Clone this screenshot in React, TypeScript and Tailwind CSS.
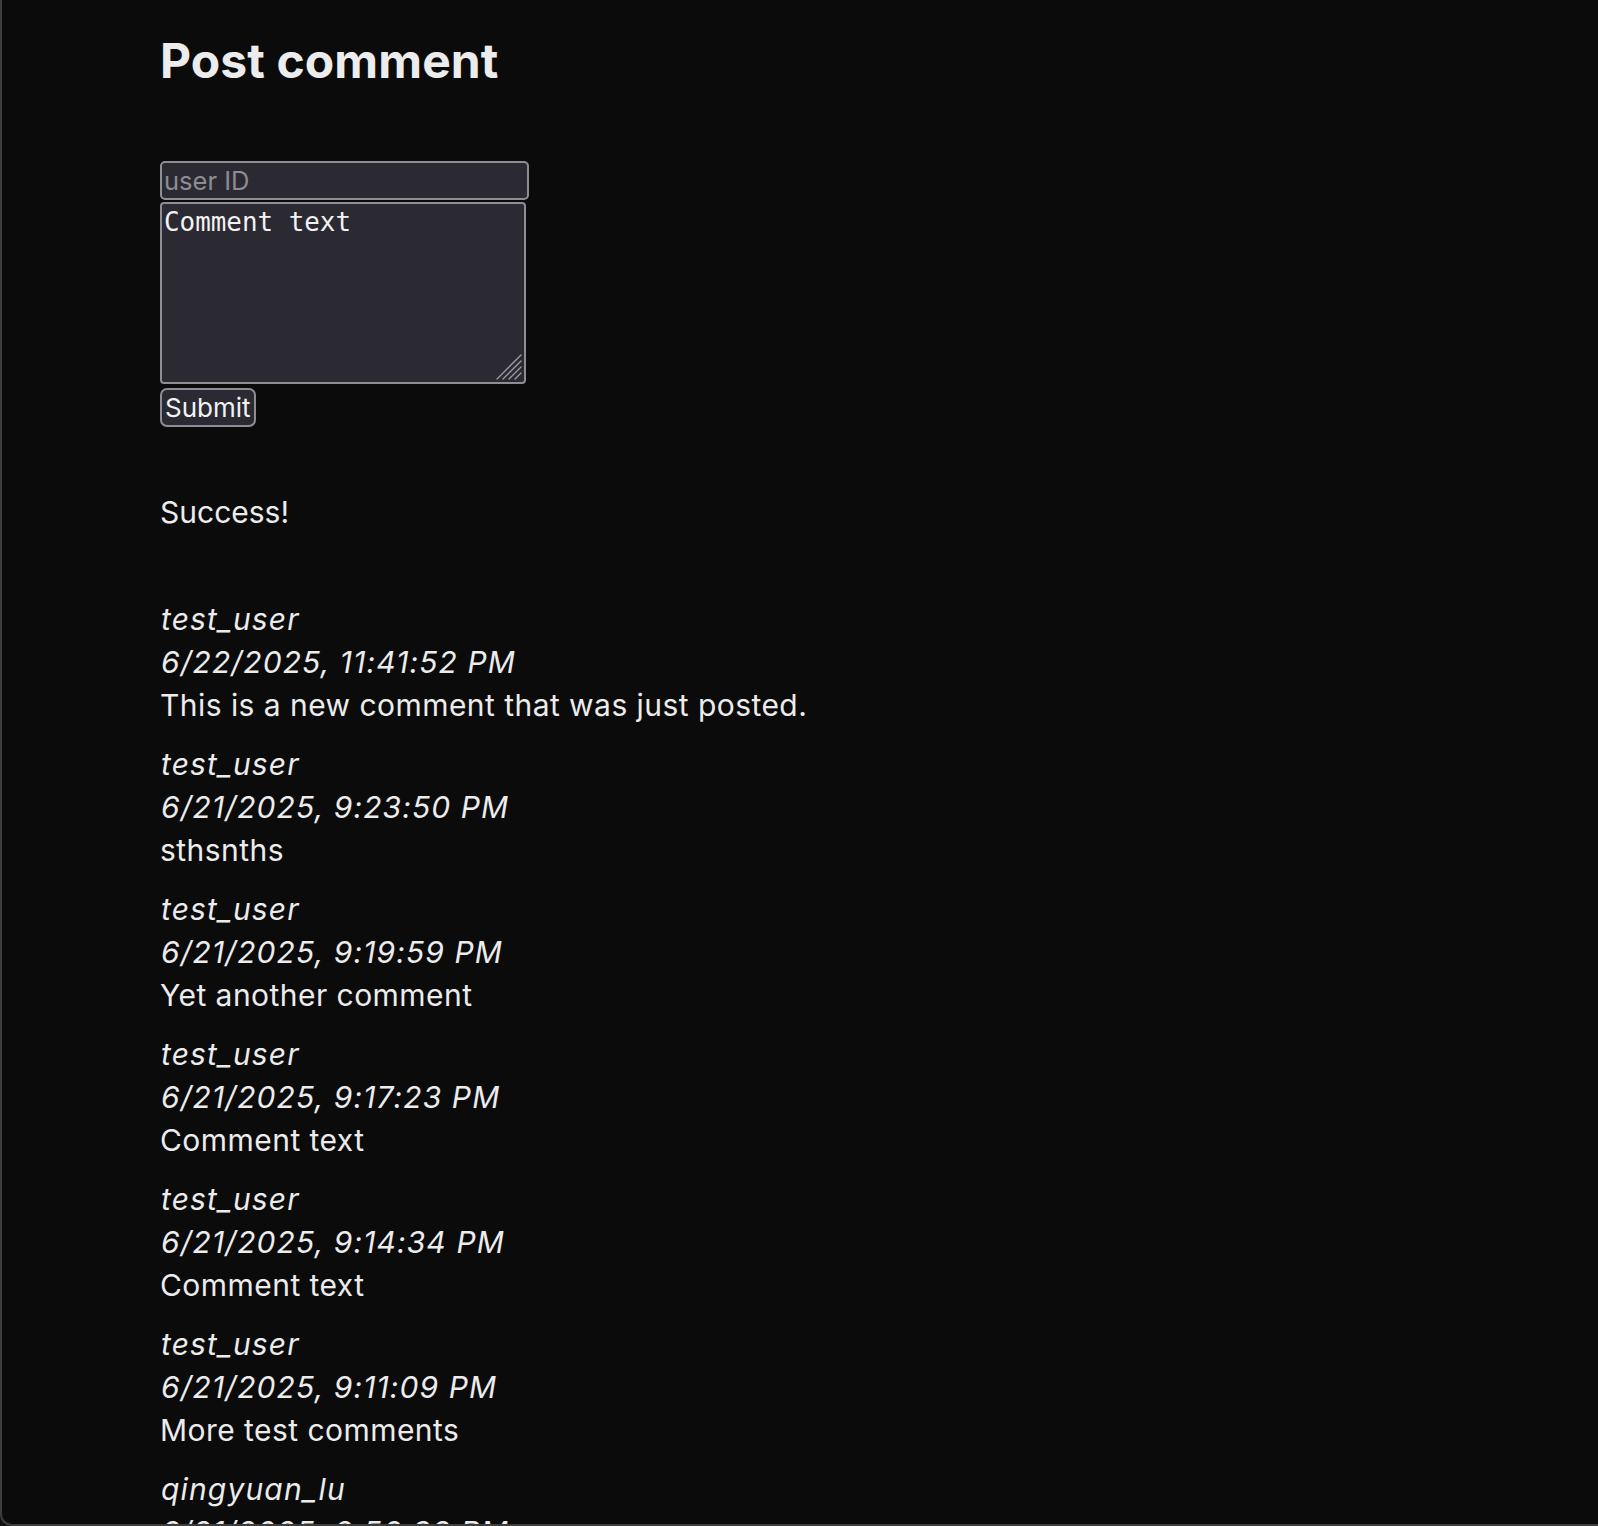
import React from "react";

const COMMENTS = [
  { user: "test_user", time: "6/22/2025, 11:41:52 PM", text: "This is a new comment that was just posted." },
  { user: "test_user", time: "6/21/2025, 9:23:50 PM", text: "sthsnths" },
  { user: "test_user", time: "6/21/2025, 9:19:59 PM", text: "Yet another comment" },
  { user: "test_user", time: "6/21/2025, 9:17:23 PM", text: "Comment text" },
  { user: "test_user", time: "6/21/2025, 9:14:34 PM", text: "Comment text" },
  { user: "test_user", time: "6/21/2025, 9:11:09 PM", text: "More test comments" },
  { user: "qingyuan_lu", time: "6/21/2025, 8:56:38 PM", text: "First comment" },
];

const App = () => {
  return (
    <div className="w-[1598px] h-[1526px] bg-[#111111] [color-scheme:dark]">
      <div className="h-full overflow-hidden rounded-bl-[12px] border-l-2 border-b-2 border-[#3d3d3d] bg-[#0b0b0b] text-[#ececec] font-['Inter','Liberation_Sans',sans-serif]">
        <div className="pl-[158px] pt-[32px]">
          {/* Header */}
          <h1 className="text-[48px] leading-[58px] font-bold tracking-[0.1px]">Post comment</h1>

          {/* Form */}
          <form className="mt-[71px] flex flex-col items-start" onSubmit={(e) => e.preventDefault()}>
            <input
              type="text"
              placeholder="user ID"
              className="box-border w-[369px] h-[39px] px-[2px] rounded-[5px] border-2 border-[#8e8d93] bg-[#2b2a32] text-[25.5px] leading-[30px] text-[#ececec] placeholder:text-[#8d8c92] outline-none"
            />
            <div className="relative mt-[2px]">
              <textarea
                defaultValue="Comment text"
                className="block box-border w-[366px] h-[182px] px-[2px] pt-[3px] resize-none rounded-[4px] border-2 border-[#8e8d93] bg-[#2b2a32] text-[25.9px] leading-[30px] text-[#f2f2f2] font-['DejaVu_Sans_Mono',monospace] outline-none"
              />
              {/* resize grip */}
              <svg className="absolute right-[4px] bottom-[4px] pointer-events-none" width="26" height="26" viewBox="0 0 26 26">
                <g stroke="#9a999f" strokeWidth="1.4" strokeLinecap="round">
                  <line x1="25" y1="1" x2="1" y2="25" />
                  <line x1="25" y1="7" x2="7" y2="25" />
                  <line x1="25" y1="13" x2="13" y2="25" />
                  <line x1="25" y1="19" x2="19" y2="25" />
                </g>
              </svg>
            </div>
            <button
              type="submit"
              className="box-border mt-[4px] h-[39px] px-[3px] rounded-[7px] border-2 border-[#8e8d93] bg-[#2b2a32] text-[26px] leading-[30px] text-[#f2f2f2]"
            >
              Submit
            </button>
          </form>

          <p className="mt-[64px] text-[30px] leading-[43px]">Success!</p>

          {/* Comments */}
          <div className="mt-[64px] flex flex-col gap-[16px]">
            {COMMENTS.map((c, i) => (
              <div key={i} className="text-[30px] leading-[43px]">
                <div className="italic tracking-[1.15px] pl-[1px]">{c.user}</div>
                <div className="italic tracking-[1.1px] pl-[1px]">{c.time}</div>
                <div className="tracking-[0.45px]">{c.text}</div>
              </div>
            ))}
          </div>
        </div>
      </div>
    </div>
  );
};

export default App;
